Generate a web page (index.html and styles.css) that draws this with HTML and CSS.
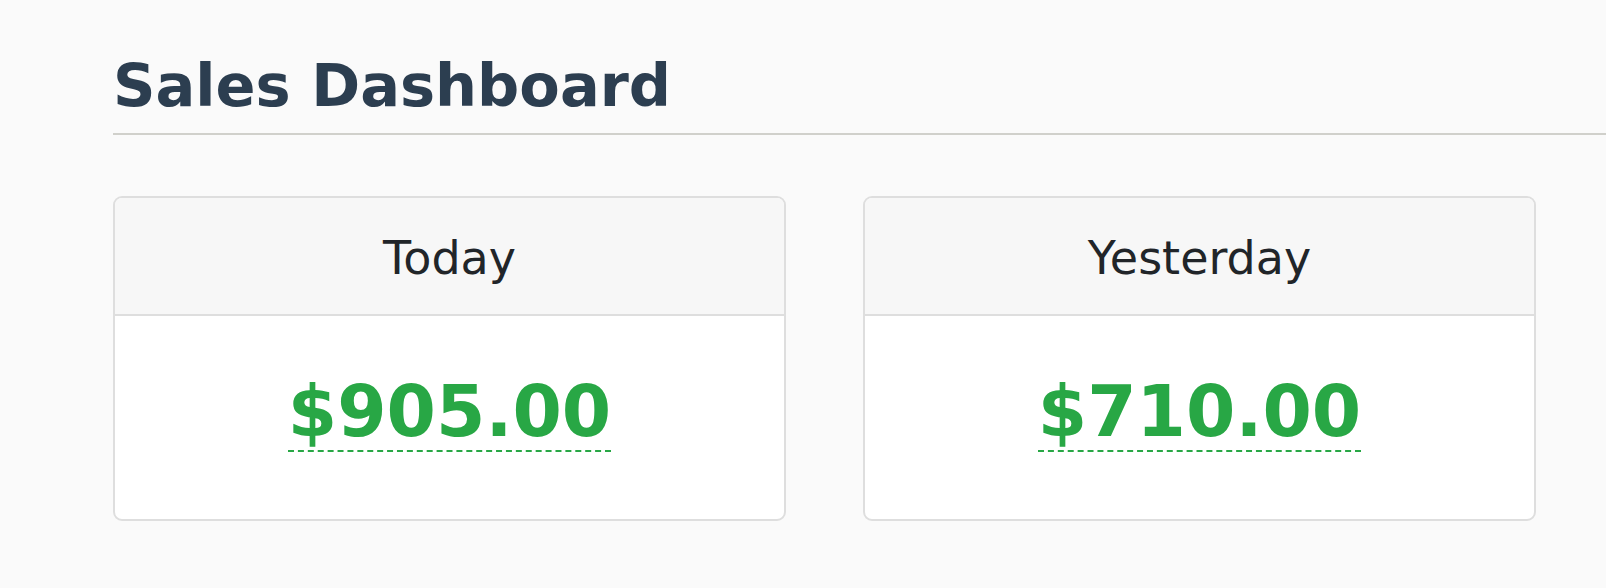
FILE: index.html
```html
<!DOCTYPE html>
<html>
<head>
<meta charset="utf-8">
<link rel="stylesheet" href="styles.css">
</head>
<body>
<div class="page">
  <h1 class="title">Sales Dashboard</h1>
  <div class="rule"></div>
  <div class="cards">
    <div class="card">
      <div class="card-head">Today</div>
      <div class="card-body"><span class="amount">$905.00</span></div>
    </div>
    <div class="card">
      <div class="card-head">Yesterday</div>
      <div class="card-body"><span class="amount">$710.00</span></div>
    </div>
  </div>
</div>
</body>
</html>
```
FILE: styles.css
```css
html, body {
  margin: 0;
  padding: 0;
  background: #fafafa;
}
body {
  font-family: "DejaVu Sans", Verdana, sans-serif;
}
.page {
  padding: 51px 0 0 113px;
}
.title {
  margin: 0;
  font-size: 59px;
  font-weight: bold;
  line-height: 70px;
  color: #2c3e50;
}
.rule {
  margin-top: 12px;
  height: 2px;
  background: #d0d0cb;
}
.cards {
  margin-top: 61px;
  width: 1423px;
  display: flex;
  gap: 77px;
}
.card {
  flex: 1;
  border: 2px solid #dedede;
  border-radius: 9px;
  background: #fff;
  overflow: hidden;
}
.card-head {
  height: 112px;
  padding-top: 4px;
  background: #f7f7f7;
  border-bottom: 2px solid #dedede;
  display: flex;
  align-items: center;
  justify-content: center;
  font-size: 46px;
  color: #212529;
}
.card-body {
  height: 203px;
  display: flex;
  justify-content: center;
  align-items: flex-start;
}
.amount {
  margin-top: 57px;
  font-size: 71px;
  font-weight: bold;
  color: #28a745;
  line-height: 77px;
  border-bottom: 2px dashed #28a745;
}
```
